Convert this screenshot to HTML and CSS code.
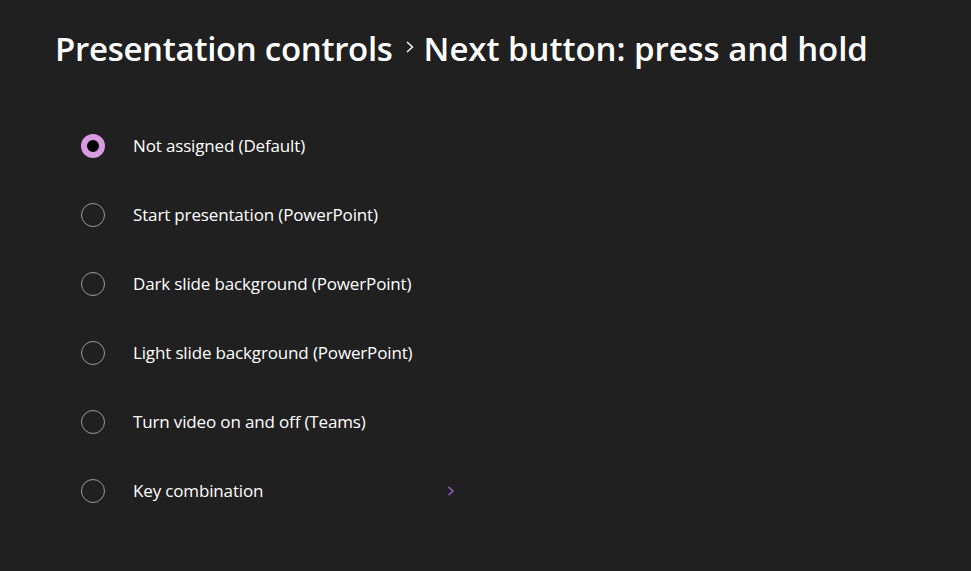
FILE: index.html
```html
<!DOCTYPE html>
<html lang="en">
<head>
<meta charset="utf-8">
<title>Presentation controls</title>
<link rel="stylesheet" href="styles.css">
</head>
<body>
<main class="page">
  <h1 class="title">
    <span class="crumb">Presentation controls</span>
    <svg class="crumb-sep" width="10" height="12" viewBox="0 0 10 12"><path d="M2 1 L7.5 6 L2 11" fill="none" stroke="#ffffff" stroke-width="1.4"/></svg>
    <span class="crumb current">Next button: press and hold</span>
  </h1>
  <ul class="options">
    <li class="option"><span class="radio checked"></span><span class="label">Not assigned (Default)</span></li>
    <li class="option"><span class="radio"></span><span class="label">Start presentation (PowerPoint)</span></li>
    <li class="option"><span class="radio"></span><span class="label">Dark slide background (PowerPoint)</span></li>
    <li class="option"><span class="radio"></span><span class="label">Light slide background (PowerPoint)</span></li>
    <li class="option"><span class="radio"></span><span class="label">Turn video on and off (Teams)</span></li>
    <li class="option with-chevron"><span class="radio"></span><span class="label">Key combination</span>
      <svg class="chev" width="8" height="12" viewBox="0 0 8 12"><path d="M1.5 2 L6 6 L1.5 10" fill="none" stroke="#a55fc9" stroke-width="1.5"/></svg>
    </li>
  </ul>
</main>
</body>
</html>
```
FILE: styles.css
```css
html, body {
  margin: 0;
  padding: 0;
  background: #202020;
  height: 100%;
}
body {
  font-family: "Open Sans", "Noto Sans", sans-serif;
  color: #ffffff;
}
.page {
  padding: 27px 0 0 55px;
}
.title {
  margin: 0;
  font-size: 33px;
  font-weight: 600;
  display: flex;
  align-items: center;
  line-height: 44px;
  letter-spacing: -0.3px;
}
.crumb.current {
  letter-spacing: -0.05px;
}
.crumb-sep {
  margin: 0 9px 0 12px;
  position: relative;
  top: -2px;
}
.options {
  list-style: none;
  margin: 0;
  padding: 63px 0 0 26px;
  display: flex;
  flex-direction: column;
  gap: 45px;
}
.option {
  display: flex;
  align-items: center;
  height: 24px;
  width: 374px;
}
.radio {
  box-sizing: border-box;
  width: 24px;
  height: 24px;
  border-radius: 50%;
  border: 1.5px solid #9b9b9b;
  flex: none;
}
.radio.checked {
  border: 6px solid #d89be1;
  background: #000;
}
.label {
  margin-left: 28px;
  font-size: 17px;
  color: #ffffff;
  letter-spacing: -0.15px;
  position: relative;
  top: -1px;
}
.chev {
  margin-left: auto;
}
```
